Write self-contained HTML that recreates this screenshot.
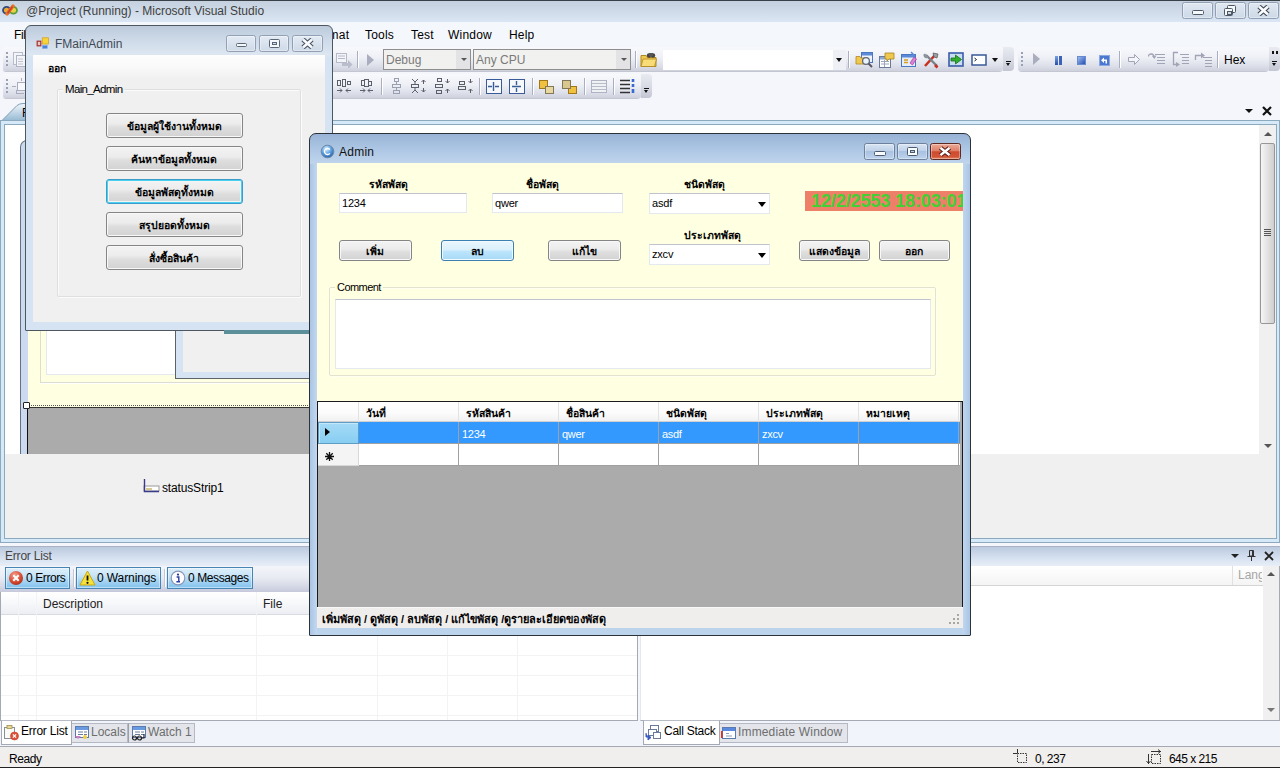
<!DOCTYPE html>
<html><head><meta charset="utf-8"><title>@Project (Running) - Microsoft Visual Studio</title>
<style>
*{box-sizing:border-box;margin:0;padding:0}
html,body{width:1280px;height:768px;overflow:hidden}
body{position:relative;background:#f4f6fb;font-family:"Liberation Sans",sans-serif;font-size:12px;color:#000}
.a{position:absolute}
.t{position:absolute;white-space:nowrap;line-height:16px;height:16px}
.th{font-weight:bold;font-size:10.4px}
/* VS chrome */
#vstitle{left:0;top:0;width:1280px;height:22px;background:linear-gradient(#c4d0dd,#cfdbe8 50%,#dae6f3);border-top:1px solid #3a4048}
#menubar{left:0;top:22px;width:1280px;height:24px;background:#f4f7fc}
.tb{position:absolute;border-radius:3px 4px 4px 3px;background:linear-gradient(#f8f9fc,#eef0f6 45%,#dcdfe9 80%,#ced1dc);box-shadow:0 1px 0 #c4c7d2}
.ov{position:absolute;border-radius:0 4px 4px 0;background:linear-gradient(#e9ebf2,#d5d8e2 60%,#c4c7d3)}
.cap{position:absolute;border:1px solid #93a0b3;border-radius:2.5px;box-shadow:inset 0 0 0 1px rgba(255,255,255,.35)}
.sep{position:absolute;width:1px;background:#a9aec0;box-shadow:1px 0 0 #fff}
.btn{position:absolute;border:1px solid #858585;border-radius:3px;background:linear-gradient(#f3f3f3,#ececec 42%,#dedede 58%,#d2d2d2);box-shadow:inset 0 0 0 1px #f8f8f8;text-align:center;font-weight:bold;font-size:10.4px;line-height:22px;white-space:nowrap;overflow:hidden}
.btn.hot{border-color:#3c7fb1;background:linear-gradient(#eaf6fd,#d9f0fc 48%,#bee6fd 52%,#a7d9f5);box-shadow:inset 0 0 0 1px #f0faff}
.btn.foc{border-color:#3c9bc8;box-shadow:inset 0 0 0 1px #48d0f0, inset 0 0 0 2px #f4f4f4}
.k{display:inline-block;overflow:hidden;white-space:nowrap;vertical-align:top;height:100%;text-align:left}
.txt{position:absolute;background:#fff;border:1px solid #e3e9ef;border-top-color:#bfc3cb;font-size:11px;line-height:18px;padding-left:2px;white-space:nowrap;letter-spacing:-.2px}
</style></head><body>
<!-- ===== VS title bar ===== -->
<div id="vstitle" class="a"></div>
<div class="t" style="left:26px;top:3px;font-size:12px;color:#3f3f3f">@Project (Running) - Microsoft Visual Studio</div>
<!-- VS icon + caption buttons -->
<svg class="a" style="left:2px;top:4px" width="16" height="12" viewBox="0 0 16 12"><ellipse cx="4.600" cy="6.200" rx="3.600" ry="3.400" fill="#e8a838" stroke="#34487c" stroke-width="1.800"/><ellipse cx="11.400" cy="6.200" rx="3.600" ry="3.400" fill="#e4d444" stroke="#5c9c3c" stroke-width="1.800"/><path d="M5 10 L11 2" stroke="#e8702a" stroke-width="3.400" stroke-linecap="round"/><path d="M5.600 9.200 L10.400 2.800" stroke="#d23c28" stroke-width="1.500"/></svg>
<div class="cap" style="left:1182px;top:2px;width:31px;height:17px;background:linear-gradient(#e0e8f2,#cdd9e7)"></div>
<div class="a" style="left:1192px;top:10px;width:12px;height:5px;border:1px solid #4f5966;border-radius:1.5px;background:#f6f9fc"></div>
<div class="cap" style="left:1215px;top:2px;width:31px;height:17px;background:linear-gradient(#e0e8f2,#cdd9e7)"></div>
<div class="a" style="left:1227px;top:5px;width:9px;height:8px;border:1px solid #4f5966;border-radius:1.5px;background:#f6f9fc"></div>
<div class="a" style="left:1224px;top:8px;width:9px;height:8px;border:1px solid #4f5966;border-radius:1.5px;background:#f6f9fc"></div>
<div class="a" style="left:1227px;top:11px;width:3px;height:2px;border:1px solid #4f5966;background:#d0dae6;box-sizing:content-box"></div>
<div class="cap" style="left:1248px;top:2px;width:31px;height:17px;background:linear-gradient(#e0e8f2,#cdd9e7)"></div>
<svg class="a" style="left:1257px;top:5px" width="13" height="11" viewBox="0 0 13 11"><path d="M2 1.5 L11 9.5 M11 1.5 L2 9.5" stroke="#3f4852" stroke-width="4.8"/><path d="M2 1.5 L11 9.5 M11 1.5 L2 9.5" stroke="#fafcff" stroke-width="2.6"/></svg>
<div id="menubar" class="a"></div>
<div class="t" style="left:14px;top:27px;font-size:12px;letter-spacing:-.4px">File</div>
<div class="t" style="left:310px;top:27px;font-size:12px;letter-spacing:.2px">Format</div>
<div class="t" style="left:365px;top:27px;font-size:12px;letter-spacing:.2px">Tools</div>
<div class="t" style="left:411px;top:27px;font-size:12px;letter-spacing:.2px">Test</div>
<div class="t" style="left:448px;top:27px;font-size:12px;letter-spacing:.2px">Window</div>
<div class="t" style="left:509px;top:27px;font-size:12px;letter-spacing:.2px">Help</div>
<!-- ===== toolbars ===== -->
<div class="tb" style="left:3px;top:47px;width:1000px;height:24px"></div>
<div class="ov" style="left:1003px;top:47px;width:11px;height:24px"></div>
<div class="tb" style="left:1018px;top:47px;width:251px;height:24px;border-radius:4px"></div>
<div class="ov" style="left:1269px;top:47px;width:11px;height:24px"></div>
<div class="tb" style="left:3px;top:74px;width:638px;height:24px"></div>
<div class="ov" style="left:641px;top:74px;width:11px;height:24px"></div>
<!-- combos -->
<div class="a" style="left:383px;top:49px;width:88px;height:21px;border:1px solid #8e8e8e;background:#f1f1ef"></div>
<div class="a" style="left:456px;top:50px;width:14px;height:19px;background:#e3e3e6"></div>
<div class="t" style="left:386px;top:52px;font-size:12px;color:#7a7a7a">Debug</div>
<div class="a" style="left:461px;top:58px;border:3px solid transparent;border-top:3px solid #555;border-bottom:0"></div>
<div class="a" style="left:473px;top:49px;width:158px;height:21px;border:1px solid #8e8e8e;background:#f1f1ef"></div>
<div class="a" style="left:616px;top:50px;width:14px;height:19px;background:#e3e3e6"></div>
<div class="t" style="left:476px;top:52px;font-size:12px;color:#7a7a7a">Any CPU</div>
<div class="a" style="left:621px;top:58px;border:3px solid transparent;border-top:3px solid #555;border-bottom:0"></div>
<div class="a" style="left:663px;top:50px;width:183px;height:20px;background:#fff"></div>
<div class="a" style="left:833px;top:50px;width:13px;height:20px;background:#eef0f6"></div>
<div class="a" style="left:836px;top:58px;border:3.5px solid transparent;border-top:4px solid #111;border-bottom:0"></div>
<div class="t" style="left:1224px;top:52px;font-size:12px">Hex</div>
<div class="a" style="left:6px;top:52px;width:2px;height:2px;background:#9aa0b4;box-shadow:0 4px 0 #9aa0b4,0 8px 0 #9aa0b4,0 12px 0 #9aa0b4"></div>
<div class="a" style="left:6px;top:79px;width:2px;height:2px;background:#9aa0b4;box-shadow:0 4px 0 #9aa0b4,0 8px 0 #9aa0b4,0 12px 0 #9aa0b4"></div>
<div class="a" style="left:1021px;top:52px;width:2px;height:2px;background:#9aa0b4;box-shadow:0 4px 0 #9aa0b4,0 8px 0 #9aa0b4,0 12px 0 #9aa0b4"></div>
<div class="a" style="left:1006px;top:61px;width:5px;height:1px;background:#111"></div><div class="a" style="left:1006px;top:63px;border:2.5px solid transparent;border-top:3px solid #111;border-bottom:0"></div>
<div class="a" style="left:644px;top:88px;width:5px;height:1px;background:#111"></div><div class="a" style="left:644px;top:90px;border:2.5px solid transparent;border-top:3px solid #111;border-bottom:0"></div>
<div class="a" style="left:1272px;top:61px;width:5px;height:1px;background:#111"></div><div class="a" style="left:1272px;top:63px;border:2.5px solid transparent;border-top:3px solid #111;border-bottom:0"></div>
<div class="a" style="left:1272px;top:51px;width:2px;height:3px;background:#111;box-shadow:4px 0 0 #111"></div>
<svg class="a" style="left:12px;top:51px" width="14" height="16" viewBox="0 0 14 16"><rect x="1.500" y="1.500" width="9" height="12" fill="#f4f5f9" stroke="#b8bccb"/><rect x="4.500" y="4.500" width="9" height="11" fill="#f4f5f9" stroke="#b0b4c4"/><path d="M6 8h5M6 10.500h5M6 13h5" stroke="#c0c4d0"/></svg>
<svg class="a" style="left:12px;top:78px" width="14" height="16" viewBox="0 0 14 16"><rect x="5.500" y="4.500" width="8" height="8" fill="#f8f9fc" stroke="#a8acbc"/><path d="M0 8.500h4 M9.500 0v3 M4 15.500h8 M4.500 12v4" stroke="#a8acbc"/></svg>
<svg class="a" style="left:336px;top:52px" width="17" height="16" viewBox="0 0 17 16"><rect x="0.500" y="1.500" width="10" height="9" fill="#f4f5f9" stroke="#b5b9c8"/><path d="M2 4h7M2 6.500h7" stroke="#b5b9c8"/><path d="M6 11h6v-3l4.500 4.500-4.500 4.500v-3h-6z" fill="#b9bdcc"/></svg>
<div class="sep" style="left:357px;top:51px;height:17px"></div>
<div class="a" style="left:367px;top:54px;border:6px solid transparent;border-left:7px solid #a9adbd;border-right:0"></div>
<div class="sep" style="left:635px;top:51px;height:17px"></div>
<svg class="a" style="left:640px;top:51px" width="18" height="17" viewBox="0 0 18 17"><path d="M1 4.500h5l1.500 2H16v9H1z" fill="#f0c850" stroke="#b08820" stroke-width="1"/><path d="M3 8h13.500l-2 7.500H1z" fill="#f8dc78" stroke="#b08820" stroke-width=".8"/><circle cx="9" cy="4.500" r="2.200" fill="#444"/><circle cx="13" cy="4.500" r="2.200" fill="#444"/><rect x="9" y="2" width="4" height="3" fill="#555"/></svg>
<div class="sep" style="left:848px;top:51px;height:17px"></div>
<svg class="a" style="left:855px;top:51px" width="19" height="18" viewBox="0 0 19 18"><rect x="6.500" y="1.500" width="11" height="10" fill="#eef3fb" stroke="#4a78c0"/><rect x="7" y="2" width="10" height="2.500" fill="#5a8ad8"/><path d="M1 5.500h4l1 1.500h5v6H1z" fill="#f0c850" stroke="#b08820" stroke-width=".8"/><circle cx="11" cy="10" r="3.400" fill="#e8f4ff" stroke="#667" stroke-width="1.300"/><path d="M13.500 12.500L17 16" stroke="#556" stroke-width="2"/></svg>
<svg class="a" style="left:878px;top:51px" width="18" height="18" viewBox="0 0 18 18"><rect x="1.500" y="5.500" width="11" height="11" fill="#fff" stroke="#6a7a98"/><rect x="2" y="6" width="10" height="2.500" fill="#8aa8d8"/><path d="M3 10.500h8M3 13h8M6.500 9v7" stroke="#9aa6bc"/><path d="M7 2h9v6h-5l-2 2v-2H7z" fill="#f0c850" stroke="#a88420" stroke-width=".8"/></svg>
<svg class="a" style="left:900px;top:51px" width="18" height="18" viewBox="0 0 18 18"><rect x="1.500" y="3.500" width="14" height="12" fill="#e6eefa" stroke="#4a78c0"/><rect x="2" y="4" width="13" height="2.500" fill="#5a8ad8"/><path d="M4 9h4M4 11.500h4" stroke="#d8a020" stroke-width="1.500"/><path d="M10 12l4-6 2.500 2-4 6z" fill="#e080d0" stroke="#a040a0" stroke-width=".7"/><path d="M11 1l3 3" stroke="#5a8ad8" stroke-width="1.500"/></svg>
<svg class="a" style="left:922px;top:51px" width="19" height="18" viewBox="0 0 19 18"><path d="M3 15L13 4" stroke="#c83020" stroke-width="2.600"/><path d="M11 2l5 1-1 4-3-1z" fill="#9aa0a8" stroke="#555" stroke-width=".7"/><path d="M4 4l11 11" stroke="#7a828c" stroke-width="2.400"/><path d="M1.500 3.500a3 3 0 0 0 4 3.500l1-1-3.500-3.500z" fill="#8a929c"/><path d="M13 14l2.500 2.500" stroke="#c83020" stroke-width="2.600"/></svg>
<svg class="a" style="left:948px;top:52px" width="16" height="15" viewBox="0 0 16 15"><rect x="1" y="1" width="14" height="13" fill="#c9dcf4" stroke="#3a5ca8" stroke-width="1.600"/><path d="M3 6h4.500V3l6 4.500-6 4.500V9H3z" fill="#2fae2f" stroke="#187018" stroke-width=".8"/></svg>
<svg class="a" style="left:971px;top:54px" width="16" height="12" viewBox="0 0 16 12"><rect x="1" y="1" width="14" height="10" fill="#fff" stroke="#3a5a98" stroke-width="1.500"/><path d="M3.500 4l2 1.500-2 1.500" stroke="#222" stroke-width="1" fill="none"/></svg>
<div class="a" style="left:992px;top:58px;border:3.500px solid transparent;border-top:4px solid #111;border-bottom:0"></div>
<div class="a" style="left:1033px;top:53px;border:6px solid transparent;border-left:7px solid #a9adbd;border-right:0"></div>
<div class="a" style="left:1055px;top:56px;width:3px;height:9px;background:linear-gradient(#7aa0e0,#2a4ea8);box-shadow:4px 0 0 #3a62b8"></div>
<div class="a" style="left:1077px;top:56px;width:9px;height:9px;background:linear-gradient(135deg,#9abcf0,#2a50b0);border:1px solid #6a8ad0"></div>
<svg class="a" style="left:1099px;top:55px" width="11" height="11" viewBox="0 0 11 11"><rect x=".5" y=".5" width="10" height="10" fill="#4a78d0" stroke="#8aa8e0"/><path d="M8 8.500V4.500H5V2.500L2 5.200l3 2.800V6h1.500v2.500z" fill="#fff"/></svg>
<div class="sep" style="left:1119px;top:51px;height:17px"></div>
<svg class="a" style="left:1127px;top:53px" width="14" height="13" viewBox="0 0 14 13"><path d="M1.500 4.500h6v-3l5 5-5 5v-3h-6z" fill="#f4f5fa" stroke="#a0a4b4"/></svg>
<svg class="a" style="left:1147px;top:51px" width="19" height="16" viewBox="0 0 19 16"><path d="M8 3.500h10M10 6.500h8M10 9.500h8M10 12.500h8" stroke="#a0a4b4"/><path d="M7 6.500C7 2 1.500 2 1.500 5.500" stroke="#a0a4b4" fill="none" stroke-width="1.300"/><path d="M5 5l2.500 3 2-3.500z" fill="#a0a4b4"/></svg>
<svg class="a" style="left:1171px;top:51px" width="19" height="18" viewBox="0 0 19 18"><path d="M9 3.500h9M11 6.500h7M11 9.500h7M11 12.500h7" stroke="#a0a4b4"/><path d="M7 1.500H2.500v12H6" stroke="#a0a4b4" fill="none" stroke-width="1.300"/><path d="M5 11l4 2.500L5 16z" fill="#a0a4b4"/></svg>
<svg class="a" style="left:1193px;top:51px" width="20" height="17" viewBox="0 0 20 17"><path d="M10 6.500h9M12 9.500h7M12 12.500h7M12 15.500h7" stroke="#a0a4b4"/><path d="M2.500 9V4.500h7" stroke="#a0a4b4" fill="none" stroke-width="1.300"/><path d="M8 1.500l4 3-4 3z" fill="#a0a4b4"/></svg>
<div class="sep" style="left:1217px;top:51px;height:17px"></div>
<svg class="a" style="left:336px;top:78px" width="17" height="17" viewBox="0 0 17 17"><g stroke="#5a5f6a" fill="none" stroke-width="1"><rect x="1.500" y="2.500" width="3" height="5"/><rect x="6.500" y="1.500" width="3" height="7"/><rect x="11.500" y="3.500" width="3" height="3"/><path d="M1 12.500h5M4 10.500l2 2-2 2M15 12.500h-5M12 10.500l-2 2 2 2"/></g></svg>
<svg class="a" style="left:360px;top:78px" width="14" height="17" viewBox="0 0 14 17"><g stroke="#5a5f6a" fill="none" stroke-width="1"><rect x="1.500" y="2.500" width="3" height="5"/><rect x="4.500" y="1.500" width="4" height="7"/><rect x="8.500" y="3.500" width="3" height="4"/><path d="M0 12.500h5M3 10.500l2 2-2 2M13 12.500h-5M10 10.500l-2 2 2 2"/></g></svg>
<div class="sep" style="left:381px;top:78px;height:17px"></div>
<svg class="a" style="left:391px;top:78px" width="12" height="17" viewBox="0 0 12 17"><g stroke="#9a9fb0" fill="none" stroke-width="1"><rect x="3.500" y=".500" width="4" height="3"/><rect x="1.500" y="6.500" width="8" height="3"/><rect x="2.500" y="12.500" width="6" height="3"/><path d="M5.500 4v2M5.500 10v2"/></g></svg>
<svg class="a" style="left:410px;top:78px" width="17" height="17" viewBox="0 0 17 17"><g stroke="#5a5f6a" fill="none" stroke-width="1"><path d="M2 1l3 3 3-3M2 15l3-3 3 3M5 4v2M5 10v2"/><rect x="1.500" y="6.500" width="7" height="3"/><path d="M13.500 2v4M11.500 4l2-2 2 2M13.500 14v-4M11.500 12l2 2 2-2"/></g></svg>
<svg class="a" style="left:434px;top:78px" width="17" height="17" viewBox="0 0 17 17"><g stroke="#5a5f6a" fill="none" stroke-width="1"><rect x="3.500" y=".500" width="4" height="3"/><rect x="1.500" y="6.500" width="7" height="3"/><rect x="2.500" y="12.500" width="5" height="3"/><path d="M13.500 1v4M11.500 3l2 2 2-2M13.500 15v-4M11.500 13l2-2 2 2"/></g></svg>
<svg class="a" style="left:457px;top:78px" width="17" height="17" viewBox="0 0 17 17"><g stroke="#5a5f6a" fill="none" stroke-width="1"><rect x="2.500" y="3.500" width="5" height="3"/><rect x="1.500" y="8.500" width="7" height="3"/><path d="M13.500 1v4M11.500 3l2 2 2-2M13.500 15v-4M11.500 13l2-2 2 2"/></g></svg>
<div class="sep" style="left:479px;top:78px;height:17px"></div>
<svg class="a" style="left:485px;top:78px" width="18" height="17" viewBox="0 0 18 17"><g stroke="#5a5f6a" fill="none" stroke-width="1"><rect x="1.500" y="1.500" width="15" height="14" stroke="#3a5a98" fill="#f6f8fc"/><path d="M3 8.500h4M14 8.500h-4M8.500 4v9" stroke="#3a5a98" stroke-width="1.400"/></g></svg>
<svg class="a" style="left:508px;top:78px" width="18" height="17" viewBox="0 0 18 17"><g stroke="#5a5f6a" fill="none" stroke-width="1"><rect x="1.500" y="1.500" width="15" height="14" stroke="#3a5a98" fill="#f6f8fc"/><path d="M8.500 3v4M8.500 14v-4M4 8.500h9" stroke="#3a5a98" stroke-width="1.400"/></g></svg>
<div class="sep" style="left:532px;top:78px;height:17px"></div>
<svg class="a" style="left:538px;top:79px" width="17" height="16" viewBox="0 0 17 16"><rect x="1.500" y="1.500" width="8" height="8" fill="#f0c040" stroke="#a07818"/><rect x="7.500" y="7.500" width="8" height="7" fill="#e8d8a0" stroke="#807858"/></svg>
<svg class="a" style="left:561px;top:79px" width="17" height="16" viewBox="0 0 17 16"><rect x="7.500" y="7.500" width="8" height="7" fill="#f0c040" stroke="#a07818"/><rect x="1.500" y="1.500" width="8" height="8" fill="#d8c890" stroke="#807858"/></svg>
<div class="sep" style="left:584px;top:78px;height:17px"></div>
<svg class="a" style="left:590px;top:79px" width="18" height="15" viewBox="0 0 18 15"><rect x="1.500" y="1.500" width="15" height="12" fill="#f0f1f5" stroke="#b0b4c2"/><path d="M2 4.500h14M2 7.500h14M2 10.500h14" stroke="#b8bcc8"/></svg>
<div class="sep" style="left:613px;top:78px;height:17px"></div>
<svg class="a" style="left:619px;top:78px" width="18" height="17" viewBox="0 0 18 17"><path d="M1 2.500h10M1 6.500h10M1 10.500h10M1 14.500h10" stroke="#333" stroke-width="1.600"/><path d="M14 1v3M14 6v3M14 11v4" stroke="#3a6ad0" stroke-width="2.600"/></svg>

<!-- ===== document area ===== -->
<svg class="a" style="left:0;top:102px" width="140" height="19" viewBox="0 0 140 19"><defs><linearGradient id="tg" x1="0" y1="0" x2="0" y2="1"><stop offset="0" stop-color="#f1f6fb"/><stop offset="1" stop-color="#93b9d3"/></linearGradient></defs><path d="M1.500 19 L17 3.500 Q19.500 1.500 23 1.500 H139.500 V19Z" fill="url(#tg)" stroke="#7f9db5"/></svg>
<div class="t" style="left:22px;top:105px;font-size:12px">Form1.cs [Design]</div>
<div class="a" style="left:1245px;top:109px;border:4px solid transparent;border-top:4px solid #111;border-bottom:0"></div>
<svg class="a" style="left:1261px;top:105px" width="12" height="12" viewBox="0 0 12 12"><path d="M2 2 L10 10 M10 2 L2 10" stroke="#111" stroke-width="2.2"/></svg>
<div class="a" style="left:0;top:120px;width:1280px;height:423px;background:#d6e9f8;border:1px solid #8da9be"></div>
<div class="a" style="left:4px;top:124px;width:1273px;height:415px;background:#f0f0f0;border:1px solid #8da9be"></div>
<!-- designer surface (white) -->
<div class="a" style="left:5px;top:125px;width:1254px;height:329px;background:#fff"></div>
<!-- scrollbar -->
<div class="a" style="left:1259px;top:125px;width:17px;height:329px;background:#f0f0f0"></div>
<div class="a" style="left:1260px;top:143px;width:15px;height:181px;border:1px solid #979797;border-radius:2px;background:linear-gradient(90deg,#f5f5f5,#e2e2e2 50%,#cfcfcf)"></div>
<div class="a" style="left:1264px;top:229px;width:7px;height:1px;background:#555;box-shadow:0 2px 0 #555,0 4px 0 #555,0 6px 0 #555"></div>
<div class="a" style="left:1264px;top:132px;border:4px solid transparent;border-bottom:4px solid #555;border-top:0"></div>
<div class="a" style="left:1264px;top:444px;border:4px solid transparent;border-top:4px solid #555;border-bottom:0"></div>
<!-- designer form (mostly hidden) -->
<div class="a" style="left:20px;top:140px;width:300px;height:315px;background:#cbdaee;border:1px solid #66717f;border-radius:7px 7px 0 0;border-bottom:0"></div>
<div class="a" style="left:28px;top:170px;width:290px;height:237px;background:#ffffe1"></div>
<div class="a" style="left:40px;top:300px;width:270px;height:83px;border:1px solid #dcdcd0;box-shadow:1px 1px 0 #fff"></div>
<div class="a" style="left:46px;top:310px;width:262px;height:65px;background:#fff;border:1px solid #e3e9ef"></div>
<div class="a" style="left:27px;top:407px;width:283px;height:48px;background:#ababab;border-left:1px solid #111;border-top:1px solid #333"></div>
<div class="a" style="left:29px;top:405px;width:281px;height:0;border-top:1px dotted #555"></div>
<div class="a" style="left:23px;top:402px;width:7px;height:7px;background:#fff;border:1px solid #222;border-radius:1px"></div>
<!-- ghost window trail -->
<div class="a" style="left:175px;top:330px;width:135px;height:49px;background:#d5e3f3;border:1px solid #5d6266;border-top:0"></div>
<div class="a" style="left:183px;top:330px;width:127px;height:42px;background:#f0f0f0"></div>
<!-- component tray -->
<div class="a" style="left:5px;top:454px;width:1271px;height:84px;background:#f0f0f0"></div>
<svg class="a" style="left:143px;top:479px" width="17" height="14" viewBox="0 0 17 14"><rect x="1" y="7" width="15" height="5" fill="#fff" stroke="#9a9a9a" stroke-width="1"/><path d="M1.5 0 V12.5 H16" stroke="#3a3a8a" stroke-width="1.4" fill="none"/><rect x="3" y="9" width="6" height="2" fill="#d8c890"/></svg>
<div class="t" style="left:162px;top:480px;font-size:12px;letter-spacing:-.15px">statusStrip1</div>


<!-- ===== bottom panels ===== -->
<div class="a" style="left:0;top:546px;width:640px;height:20px;background:linear-gradient(#bccadf,#d2deee 50%,#e8eef7);border-top:1px solid #a9b3c4"></div>
<div class="t" style="left:5px;top:548px;font-size:12px;color:#444;letter-spacing:-.2px">Error List</div>
<div class="a" style="left:641px;top:546px;width:639px;height:20px;background:linear-gradient(#bccadf,#d2deee 50%,#e8eef7);border-top:1px solid #a9b3c4"></div>
<div class="a" style="left:0;top:566px;width:640px;height:26px;background:linear-gradient(#f3f5fa,#e9ebf3 45%,#d4d7e5 80%,#c6c9db)"></div>
<!-- error list grid -->
<div class="a" style="left:0;top:592px;width:638px;height:129px;background:#fff;border:1px solid #a5a9b3;border-top:0"></div>
<div class="a" style="left:1px;top:592px;width:636px;height:23px;background:linear-gradient(#fff,#f7f8fa 50%,#eceef3);border-bottom:1px solid #d8dbe2"></div>
<div class="t" style="left:43px;top:596px;font-size:12px;color:#222">Description</div>
<div class="t" style="left:263px;top:596px;font-size:12px;color:#222">File</div>
<style>
.eb{position:absolute;top:567px;height:22px;border:1px solid #4685b3;background:linear-gradient(#deeffb,#c6e3f7 40%,#a0d1f2 70%,#82c2ed);box-shadow:inset 0 0 0 1px rgba(255,255,255,.45);font-size:12px;line-height:20px;white-space:nowrap;color:#111}
.ptab{position:absolute;font-size:12px;white-space:nowrap;line-height:18px}
</style>
<div class="eb" style="left:5px;width:65px"></div>
<svg class="a" style="left:8px;top:570px" width="16" height="16" viewBox="0 0 16 16"><defs><radialGradient id="gr" cx=".4" cy=".3" r=".8"><stop offset="0" stop-color="#f5a090"/><stop offset=".6" stop-color="#d64a30"/><stop offset="1" stop-color="#a02a18"/></radialGradient></defs><circle cx="8" cy="8" r="7" fill="url(#gr)"/><path d="M5.3 5.3 L10.7 10.7 M10.7 5.3 L5.3 10.7" stroke="#fff" stroke-width="2"/></svg>
<div class="t" style="left:26px;top:570px;font-size:12px;letter-spacing:-.4px">0 Errors</div>
<div class="sep" style="left:73px;top:569px;height:18px;background:#c0c8d6"></div>
<div class="eb" style="left:76px;width:85px"></div>
<svg class="a" style="left:79px;top:570px" width="17" height="16" viewBox="0 0 17 16"><path d="M8.5 1 L16 15 H1 Z" fill="#f7e23a" stroke="#c9a810" stroke-width="1" stroke-linejoin="round"/><path d="M8.5 5.5 V10.5" stroke="#111" stroke-width="1.8"/><circle cx="8.5" cy="12.8" r="1.1" fill="#111"/></svg>
<div class="t" style="left:97px;top:570px;font-size:12px;letter-spacing:-.1px">0 Warnings</div>
<div class="sep" style="left:164px;top:569px;height:18px;background:#c0c8d6"></div>
<div class="eb" style="left:167px;width:86px"></div>
<svg class="a" style="left:170px;top:570px" width="16" height="16" viewBox="0 0 16 16"><circle cx="8" cy="8" r="6.8" fill="#fdfdff" stroke="#8a98b8" stroke-width="1.2"/><circle cx="8" cy="4.6" r="1.1" fill="#2a3aa0"/><path d="M6.6 7 H8.8 V11.5 M6.4 11.8 H10" stroke="#2a3aa0" stroke-width="1.4" fill="none"/></svg>
<div class="t" style="left:188px;top:570px;font-size:12px;letter-spacing:-.4px">0 Messages</div>
<div class="a" style="left:18px;top:592px;width:1px;height:128px;background:#f3f3f3"></div><div class="a" style="left:36px;top:592px;width:1px;height:128px;background:#f3f3f3"></div><div class="a" style="left:256px;top:592px;width:1px;height:128px;background:#f3f3f3"></div><div class="a" style="left:377px;top:592px;width:1px;height:128px;background:#f3f3f3"></div><div class="a" style="left:447px;top:592px;width:1px;height:128px;background:#f3f3f3"></div><div class="a" style="left:517px;top:592px;width:1px;height:128px;background:#f3f3f3"></div><div class="a" style="left:1px;top:635px;width:636px;height:1px;background:#f3f3f3"></div><div class="a" style="left:1px;top:655px;width:636px;height:1px;background:#f3f3f3"></div><div class="a" style="left:1px;top:675px;width:636px;height:1px;background:#f3f3f3"></div><div class="a" style="left:1px;top:695px;width:636px;height:1px;background:#f3f3f3"></div><div class="a" style="left:1px;top:715px;width:636px;height:1px;background:#f3f3f3"></div>

<!-- right panel -->
<div class="a" style="left:640px;top:566px;width:640px;height:155px;background:#fff;border:1px solid #a5a9b3;border-top:0;border-left-color:#e4e7ee"></div>
<div class="a" style="left:642px;top:566px;width:621px;height:20px;background:linear-gradient(#fff,#f4f4f4);border-bottom:1px solid #d5d5d5"></div>
<div class="a" style="left:1232px;top:566px;width:1px;height:19px;background:#e0e0e0"></div>
<div class="t" style="left:1238px;top:567px;font-size:12px;color:#a5a5a5;width:24px;overflow:hidden">Language</div>
<div class="a" style="left:1263px;top:566px;width:16px;height:154px;background:#f0f0f0"></div>
<div class="a" style="left:1267px;top:572px;border:4px solid transparent;border-bottom:4px solid #555;border-top:0"></div>
<div class="a" style="left:1267px;top:708px;border:4px solid transparent;border-top:4px solid #777;border-bottom:0"></div>
<div class="a" style="left:1231px;top:554px;border:4px solid transparent;border-top:4px solid #222;border-bottom:0"></div>
<svg class="a" style="left:1246px;top:549px" width="11" height="13" viewBox="0 0 11 13"><path d="M3.500 1.500 H7.500 V7 H3.500Z M6.500 1.500V7 M1.500 7.500 H9.500 M5.500 7.500 V12" stroke="#333" stroke-width="1" fill="none"/></svg>
<svg class="a" style="left:1263px;top:550px" width="12" height="12" viewBox="0 0 12 12"><path d="M2 2 L10 10 M10 2 L2 10" stroke="#222" stroke-width="1.8"/></svg>
<!-- tab strips -->
<div class="a" style="left:0;top:721px;width:1280px;height:26px;background:#f1f4fa;border-bottom:1px solid #a5a9b3"></div>
<div class="a" style="left:1px;top:720px;width:71px;height:25px;background:#fff;border:1px solid #a5a9b3;border-top-color:#b8bcc6"></div>
<svg class="a" style="left:3px;top:724px" width="17" height="17" viewBox="0 0 17 17"><rect x="1.5" y="3.5" width="10" height="11" fill="#fbfbf6" stroke="#8a8f98"/><rect x="4" y="1.5" width="5" height="3" fill="#e8d890" stroke="#a09050" stroke-width=".8"/><circle cx="11.5" cy="12" r="4" fill="#e0533a" stroke="#b83a25" stroke-width=".6"/><path d="M9.9 10.4 L13.1 13.6 M13.1 10.4 L9.9 13.6" stroke="#fff" stroke-width="1.2"/></svg>
<div class="ptab" style="left:21px;top:722px;color:#000;letter-spacing:-.2px">Error List</div>
<div class="a" style="left:72px;top:723px;width:56px;height:20px;background:#e3e5eb;border:1px solid #b5b9c4;border-left:0"></div>
<svg class="a" style="left:74px;top:725px" width="16" height="16" viewBox="0 0 16 16"><rect x="1.5" y="1.5" width="13" height="11" fill="#fff" stroke="#5a7ab0"/><rect x="2" y="2" width="12" height="3" fill="#6a9ae0"/><path d="M4 7h5M4 9.5h5M10 7h3M10 9.5h3" stroke="#6a7a9a" stroke-width="1"/><path d="M1 11 L4 14 L7 11Z" fill="#d080c0"/><circle cx="11" cy="12" r="2" fill="#f0d040"/></svg>
<div class="ptab" style="left:91px;top:723px;color:#6d6d6d">Locals</div>
<div class="a" style="left:128px;top:723px;width:67px;height:20px;background:#e3e5eb;border:1px solid #b5b9c4;border-left:1px solid #9a9fac"></div>
<svg class="a" style="left:131px;top:725px" width="16" height="16" viewBox="0 0 16 16"><rect x="1.5" y="1.5" width="13" height="11" fill="#fff" stroke="#5a7ab0"/><rect x="2" y="2" width="12" height="3" fill="#6a9ae0"/><path d="M4 7h5M4 9.5h5M10 7h3M10 9.5h3" stroke="#6a7a9a" stroke-width="1"/><circle cx="3.5" cy="13" r="2" fill="none" stroke="#222" stroke-width="1.2"/><circle cx="8.5" cy="13" r="2" fill="none" stroke="#222" stroke-width="1.2"/><path d="M5.5 13h1M10.5 13 H13 V9" stroke="#222" stroke-width="1.2" fill="none"/></svg>
<div class="ptab" style="left:148px;top:723px;color:#6d6d6d">Watch 1</div>
<div class="a" style="left:643px;top:720px;width:77px;height:25px;background:#fff;border:1px solid #a5a9b3;border-top-color:#b8bcc6"></div>
<svg class="a" style="left:645px;top:724px" width="17" height="17" viewBox="0 0 17 17"><rect x="5.500" y="1.500" width="8" height="6" fill="#fff" stroke="#6a7a98"/><rect x="3.500" y="5.500" width="8" height="6" fill="#fff" stroke="#6a7a98"/><rect x="8.500" y="8.500" width="7" height="6" fill="#fff" stroke="#6a7a98"/><path d="M1 9 V13 H3 M3 11 L6 13.5 L3 16Z" fill="#3a5ac0" stroke="#3a5ac0" stroke-width="1"/></svg>
<div class="ptab" style="left:664px;top:722px;color:#000;letter-spacing:-.25px">Call Stack</div>
<div class="a" style="left:720px;top:723px;width:128px;height:20px;background:#e3e5eb;border:1px solid #b5b9c4;border-left:0"></div>
<svg class="a" style="left:721px;top:726px" width="16" height="14" viewBox="0 0 16 14"><rect x="1.500" y="1.500" width="13" height="11" fill="#fff" stroke="#5a7ab0"/><rect x="2" y="2" width="12" height="3" fill="#5a8ae0"/><path d="M5 7.500h3M5 10h6" stroke="#8a9ab8" stroke-width="1"/><path d="M.8 5 V12" stroke="#e03020" stroke-width="1.6"/></svg>
<div class="ptab" style="left:738px;top:723px;color:#6d6d6d;letter-spacing:.15px">Immediate Window</div>

<!-- status bar -->
<div class="a" style="left:0;top:747px;width:1280px;height:21px;background:#f0efee;border-bottom:1px solid #222"></div>
<svg class="a" style="left:1013px;top:749px" width="16" height="16" viewBox="0 0 16 16"><rect x="4.500" y="4.500" width="9" height="9" fill="none" stroke="#333" stroke-dasharray="1.500 1"/><path d="M4.500 0v4M0 4.500h4" stroke="#333"/></svg>
<svg class="a" style="left:1146px;top:749px" width="16" height="16" viewBox="0 0 16 16"><rect x="5.500" y="5.500" width="9" height="9" fill="none" stroke="#333" stroke-dasharray="1.500 1"/><path d="M5 2.500h10M12 .5l2.500 2-2.500 2M2.500 5v10M.5 12l2 2.500 2-2.500" stroke="#333" fill="none"/></svg>
<div class="t" style="left:9px;top:751px;font-size:12px;letter-spacing:-.4px">Ready</div>
<div class="t" style="left:1035px;top:751px;font-size:12px;letter-spacing:-.5px">0, 237</div>
<div class="t" style="left:1169px;top:751px;font-size:12px;letter-spacing:-.55px">645 x 215</div>

<!-- ===== FMainAdmin window (inactive) ===== -->
<div class="a" style="left:25px;top:25px;width:308px;height:306px;border:1px solid #4e5660;border-radius:6px 6px 1px 1px;background:linear-gradient(#bccadb,#cfdbe9 15px,#dde7f2 29px,#d6e3f2 31px)"></div>
<div class="a" style="left:33px;top:55px;width:292px;height:267px;background:#f0f0f0"></div>
<div class="a" style="left:33px;top:55px;width:292px;height:24px;background:linear-gradient(#fdfdfd,#f9f9f9 50%,#f0f0f0)"></div>
<svg class="a" style="left:36px;top:36px" width="14" height="14" viewBox="0 0 14 14"><rect x="1.200" y="5.200" width="3.600" height="4.600" fill="#e8c8c0" stroke="#a83030" stroke-width="1.200"/><rect x="6.300" y="1.800" width="6.200" height="6.200" fill="#f5d43a" stroke="#d4a420" stroke-width=".8"/><rect x="6.300" y="9.300" width="5" height="3.200" fill="#4a82d8" stroke="#8ab0e8" stroke-width=".6"/></svg>
<div class="t" style="left:55px;top:36px;font-size:12px;color:#3f4a55">FMainAdmin</div>
<!-- caption buttons -->
<div class="cap" style="left:226px;top:35px;width:30px;height:17px;background:linear-gradient(#e3ebf4,#cfdae8)"></div>
<div class="a" style="left:236px;top:43px;width:11px;height:4px;border:1px solid #5b6674;border-radius:1.5px;background:#f4f7fb"></div>
<div class="cap" style="left:259px;top:35px;width:30px;height:17px;background:linear-gradient(#e3ebf4,#cfdae8)"></div>
<div class="a" style="left:269px;top:39px;width:11px;height:9px;border:1px solid #5b6674;border-radius:1.5px;background:#f4f7fb"></div>
<div class="a" style="left:272px;top:42px;width:5px;height:3px;border:1px solid #5b6674;background:#d5dfeb"></div>
<div class="cap" style="left:292px;top:35px;width:31px;height:17px;background:linear-gradient(#e3ebf4,#cfdae8)"></div>
<svg class="a" style="left:301px;top:38px" width="13" height="11" viewBox="0 0 13 11"><path d="M2 1.5 L11 9.5 M11 1.5 L2 9.5" stroke="#4a5562" stroke-width="4.8"/><path d="M2 1.5 L11 9.5 M11 1.5 L2 9.5" stroke="#fafcff" stroke-width="2.6"/></svg>
<div class="t th" style="left:48px;top:61px"><span class="k" style="width:19px">ออก</span></div>
<!-- groupbox -->
<div class="a" style="left:57px;top:89px;width:244px;height:208px;border:1px solid #dfdfdf;border-radius:2px;box-shadow:inset 1px 1px 0 #fbfbfb,1px 1px 0 #fbfbfb"></div>
<div class="t" style="left:63px;top:81px;font-size:11.5px;background:#f0f0f0;padding:0 2px;letter-spacing:-.65px">Main_Admin</div>
<div class="btn" style="left:106px;top:113px;width:137px;height:25px;line-height:25px"><span class="k" style="width:96px">ข้อมูลผู้ใช้งานทั้งหมด</span></div>
<div class="btn" style="left:106px;top:146px;width:137px;height:25px;line-height:25px"><span class="k" style="width:87px">ค้นหาข้อมูลทั้งหมด</span></div>
<div class="btn foc" style="left:106px;top:179px;width:137px;height:25px;line-height:25px"><span class="k" style="width:80px">ข้อมูลพัสดุทั้งหมด</span></div>
<div class="btn" style="left:106px;top:212px;width:137px;height:25px;line-height:25px"><span class="k" style="width:72px">สรุปยอดทั้งหมด</span></div>
<div class="btn" style="left:106px;top:245px;width:137px;height:25px;line-height:25px"><span class="k" style="width:51px">สั่งซื้อสินค้า</span></div>

<div class="a" style="left:224px;top:330px;width:86px;height:4px;background:#5b8f99"></div>
<!-- ===== Admin window (active) ===== -->
<div class="a" style="left:309px;top:133px;width:662px;height:503px;border:1px solid #2c323a;border-radius:7px 7px 1px 1px;background:linear-gradient(#98b3d5,#abc5e3 14px,#bfd4ec 29px,#bcd3ec 30px)"></div>
<div class="a" style="left:310px;top:164px;width:7px;height:471px;background:linear-gradient(90deg,#a9c5e4,#c3d8ef)"></div>
<div class="a" style="left:962px;top:164px;width:8px;height:471px;background:linear-gradient(90deg,#c3d8ef,#a9c5e4)"></div>
<div class="a" style="left:317px;top:163px;width:646px;height:464px;background:#ffffe1"></div>
<svg class="a" style="left:320px;top:144px" width="15" height="15" viewBox="0 0 15 15"><defs><radialGradient id="g1" cx=".4" cy=".3" r=".8"><stop offset="0" stop-color="#dff0ff"/><stop offset=".5" stop-color="#5aa0e0"/><stop offset="1" stop-color="#1f4f9a"/></radialGradient></defs><circle cx="7.5" cy="7.5" r="6.3" fill="url(#g1)" stroke="#6d87a8" stroke-width="1"/><path d="M9.8 5.6 A3 3 0 1 0 9.9 9.3" stroke="#fff" stroke-width="1.3" fill="none"/></svg>
<div class="t" style="left:339px;top:144px;font-size:12px;color:#111;letter-spacing:.25px">Admin</div>
<div class="cap" style="left:864px;top:143px;width:31px;height:17px;border-color:#6f819a;background:linear-gradient(#d8e4f3,#c0d2ea 45%,#a9c2e2 50%,#bdd2ec)"></div>
<div class="a" style="left:874px;top:151px;width:12px;height:5px;border:1px solid #4c5a6c;border-radius:1.5px;background:#f8fbff"></div>
<div class="cap" style="left:897px;top:143px;width:31px;height:17px;border-color:#6f819a;background:linear-gradient(#d8e4f3,#c0d2ea 45%,#a9c2e2 50%,#bdd2ec)"></div>
<div class="a" style="left:907px;top:147px;width:11px;height:9px;border:1px solid #4c5a6c;border-radius:1.5px;background:#f8fbff"></div>
<div class="a" style="left:910px;top:150px;width:5px;height:3px;border:1px solid #4c5a6c;background:#b8cde8"></div>
<div class="cap" style="left:930px;top:143px;width:31px;height:17px;border-color:#5c2a22;background:linear-gradient(#ecaa98,#df8068 45%,#cf4a2e 52%,#d25536 85%,#e08a68)"></div>
<svg class="a" style="left:938px;top:146px" width="14" height="11" viewBox="0 0 14 12" preserveAspectRatio="none"><path d="M2.5 2 L11.5 10 M11.5 2 L2.5 10" stroke="#5a221a" stroke-width="4.8"/><path d="M2.5 2 L11.5 10 M11.5 2 L2.5 10" stroke="#fff" stroke-width="2.6"/></svg>
<!-- labels -->
<div class="t th" style="left:369px;top:177px"><span class="k" style="width:40px">รหัสพัสดุ</span></div>
<div class="t th" style="left:526px;top:177px"><span class="k" style="width:34px">ชื่อพัสดุ</span></div>
<div class="t th" style="left:684px;top:177px"><span class="k" style="width:42px">ชนิดพัสดุ</span></div>
<div class="t th" style="left:684px;top:228px"><span class="k" style="width:58px">ประเภทพัสดุ</span></div>
<div class="txt" style="left:339px;top:193px;width:128px;height:20px">1234</div>
<div class="txt" style="left:492px;top:193px;width:131px;height:20px">qwer</div>
<div class="txt" style="left:649px;top:193px;width:121px;height:21px;line-height:18px">asdf</div>
<div class="txt" style="left:649px;top:244px;width:121px;height:21px;line-height:18px">zxcv</div>
<div class="a" style="left:758px;top:202px;border:4px solid transparent;border-top:5px solid #000;border-bottom:0"></div>
<div class="a" style="left:758px;top:253px;border:4px solid transparent;border-top:5px solid #000;border-bottom:0"></div>
<div class="a" style="left:805px;top:191px;width:158px;height:20px;background:#ee8069;overflow:hidden"><div class="t" style="left:6px;top:1px;font-size:18px;line-height:18px;height:18px;font-weight:bold;color:#40d232;letter-spacing:-.1px">12/2/2553 18:03:01</div></div>
<div class="btn" style="left:339px;top:240px;width:73px;height:21px;line-height:22px"><span class="k" style="width:19px">เพิ่ม</span></div>
<div class="btn hot" style="left:441px;top:240px;width:73px;height:21px;line-height:22px"><span class="k" style="width:14px">ลบ</span></div>
<div class="btn" style="left:548px;top:240px;width:73px;height:21px;line-height:22px"><span class="k" style="width:26px">แก้ไข</span></div>
<div class="btn" style="left:799px;top:240px;width:71px;height:21px;line-height:22px"><span class="k" style="width:52px">แสดงข้อมูล</span></div>
<div class="btn" style="left:879px;top:240px;width:71px;height:21px;line-height:22px"><span class="k" style="width:19px">ออก</span></div>
<!-- comment groupbox -->
<div class="a" style="left:329px;top:287px;width:607px;height:89px;border:1px solid #e2e2cf;border-radius:2px;box-shadow:inset 1px 1px 0 #fffff4,1px 1px 0 #fffff4"></div>
<div class="t" style="left:335px;top:279px;font-size:11px;background:#ffffe1;padding:0 2px;letter-spacing:-.55px">Comment</div>
<div class="txt" style="left:335px;top:299px;width:596px;height:70px"></div>
<!-- data grid -->
<div class="a" style="left:317px;top:401px;width:646px;height:206px;background:#ababab;border:1px solid #1a1a1a;border-bottom:0"></div>
<div class="a" style="left:318px;top:402px;width:642px;height:20px;background:linear-gradient(#fff,#fbfbfb 60%,#f1f1f1);border-bottom:1px solid #d0d0d0"></div>
<div class="a" style="left:318px;top:402px;width:41px;height:20px;border-right:1px solid #e2e2e2"></div>
<div class="a" style="left:359px;top:422px;width:601px;height:22px;background:#3399ff;border-bottom:1px solid #a0a0a0"></div>
<div class="a" style="left:359px;top:444px;width:601px;height:22px;background:#fff;border-bottom:1px solid #a0a0a0"></div>
<div class="a" style="left:318px;top:422px;width:41px;height:22px;background:linear-gradient(#a5daf6,#88cef2);border:1px solid #5f9dc4;box-shadow:inset 1px 1px 0 #c4e8fa"></div>
<div class="a" style="left:318px;top:444px;width:41px;height:22px;background:#f4f4f4;border-right:1px solid #d8d8d8;border-bottom:1px solid #d8d8d8"></div>
<div class="a" style="left:325px;top:428px;border:4.5px solid transparent;border-left:5px solid #000;border-right:0"></div>
<svg class="a" style="left:325px;top:452px" width="9" height="9" viewBox="0 0 9 9"><path d="M4.500 0v9M0 4.500h9M1.300 1.300l6.400 6.400M7.700 1.300l-6.400 6.400" stroke="#111" stroke-width="1.300"/></svg>
<div class="a" style="left:359px;top:402px;width:100px;height:20px;border-right:1px solid #e2e2e2"></div><div class="t th" style="left:366px;top:406px"><span class="k" style="width:21px">วันที่</span></div>
<div class="a" style="left:458px;top:422px;width:1px;height:22px;background:#a0a0a0"></div><div class="a" style="left:458px;top:444px;width:1px;height:22px;background:#a0a0a0"></div>
<div class="a" style="left:459px;top:402px;width:100px;height:20px;border-right:1px solid #e2e2e2"></div><div class="t th" style="left:466px;top:406px"><span class="k" style="width:46px">รหัสสินค้า</span></div>
<div class="a" style="left:558px;top:422px;width:1px;height:22px;background:#a0a0a0"></div><div class="a" style="left:558px;top:444px;width:1px;height:22px;background:#a0a0a0"></div>
<div class="t" style="left:462px;top:426px;font-size:11px;color:#fff;letter-spacing:-.3px">1234</div>
<div class="a" style="left:559px;top:402px;width:100px;height:20px;border-right:1px solid #e2e2e2"></div><div class="t th" style="left:566px;top:406px"><span class="k" style="width:40px">ชื่อสินค้า</span></div>
<div class="a" style="left:658px;top:422px;width:1px;height:22px;background:#a0a0a0"></div><div class="a" style="left:658px;top:444px;width:1px;height:22px;background:#a0a0a0"></div>
<div class="t" style="left:562px;top:426px;font-size:11px;color:#fff;letter-spacing:-.3px">qwer</div>
<div class="a" style="left:659px;top:402px;width:100px;height:20px;border-right:1px solid #e2e2e2"></div><div class="t th" style="left:666px;top:406px"><span class="k" style="width:42px">ชนิดพัสดุ</span></div>
<div class="a" style="left:758px;top:422px;width:1px;height:22px;background:#a0a0a0"></div><div class="a" style="left:758px;top:444px;width:1px;height:22px;background:#a0a0a0"></div>
<div class="t" style="left:662px;top:426px;font-size:11px;color:#fff;letter-spacing:-.3px">asdf</div>
<div class="a" style="left:759px;top:402px;width:100px;height:20px;border-right:1px solid #e2e2e2"></div><div class="t th" style="left:766px;top:406px"><span class="k" style="width:58px">ประเภทพัสดุ</span></div>
<div class="a" style="left:858px;top:422px;width:1px;height:22px;background:#a0a0a0"></div><div class="a" style="left:858px;top:444px;width:1px;height:22px;background:#a0a0a0"></div>
<div class="t" style="left:762px;top:426px;font-size:11px;color:#fff;letter-spacing:-.3px">zxcv</div>
<div class="a" style="left:859px;top:402px;width:100px;height:20px;border-right:1px solid #e2e2e2"></div><div class="t th" style="left:866px;top:406px"><span class="k" style="width:45px">หมายเหตุ</span></div>
<div class="a" style="left:958px;top:422px;width:1px;height:22px;background:#a0a0a0"></div><div class="a" style="left:958px;top:444px;width:1px;height:22px;background:#a0a0a0"></div>

<!-- status strip -->
<div class="a" style="left:317px;top:607px;width:646px;height:21px;background:#f0eeec;border-top:1px solid #f8f8f6"></div>
<div class="t th" style="left:322px;top:611px;font-size:10.9px"><span class="k" style="width:286px">เพิ่มพัสดุ / ดูพัสดุ / ลบพัสดุ / แก้ไขพัสดุ /ดูรายละเอียดของพัสดุ</span></div>
<svg class="a" style="left:949px;top:614px" width="12" height="12" viewBox="0 0 12 12"><g fill="#a8a8a0"><rect x="8" y="8" width="2" height="2"/><rect x="8" y="4" width="2" height="2"/><rect x="4" y="8" width="2" height="2"/><rect x="8" y="0" width="2" height="2"/><rect x="4" y="4" width="2" height="2"/><rect x="0" y="8" width="2" height="2"/></g></svg>

</body></html>
